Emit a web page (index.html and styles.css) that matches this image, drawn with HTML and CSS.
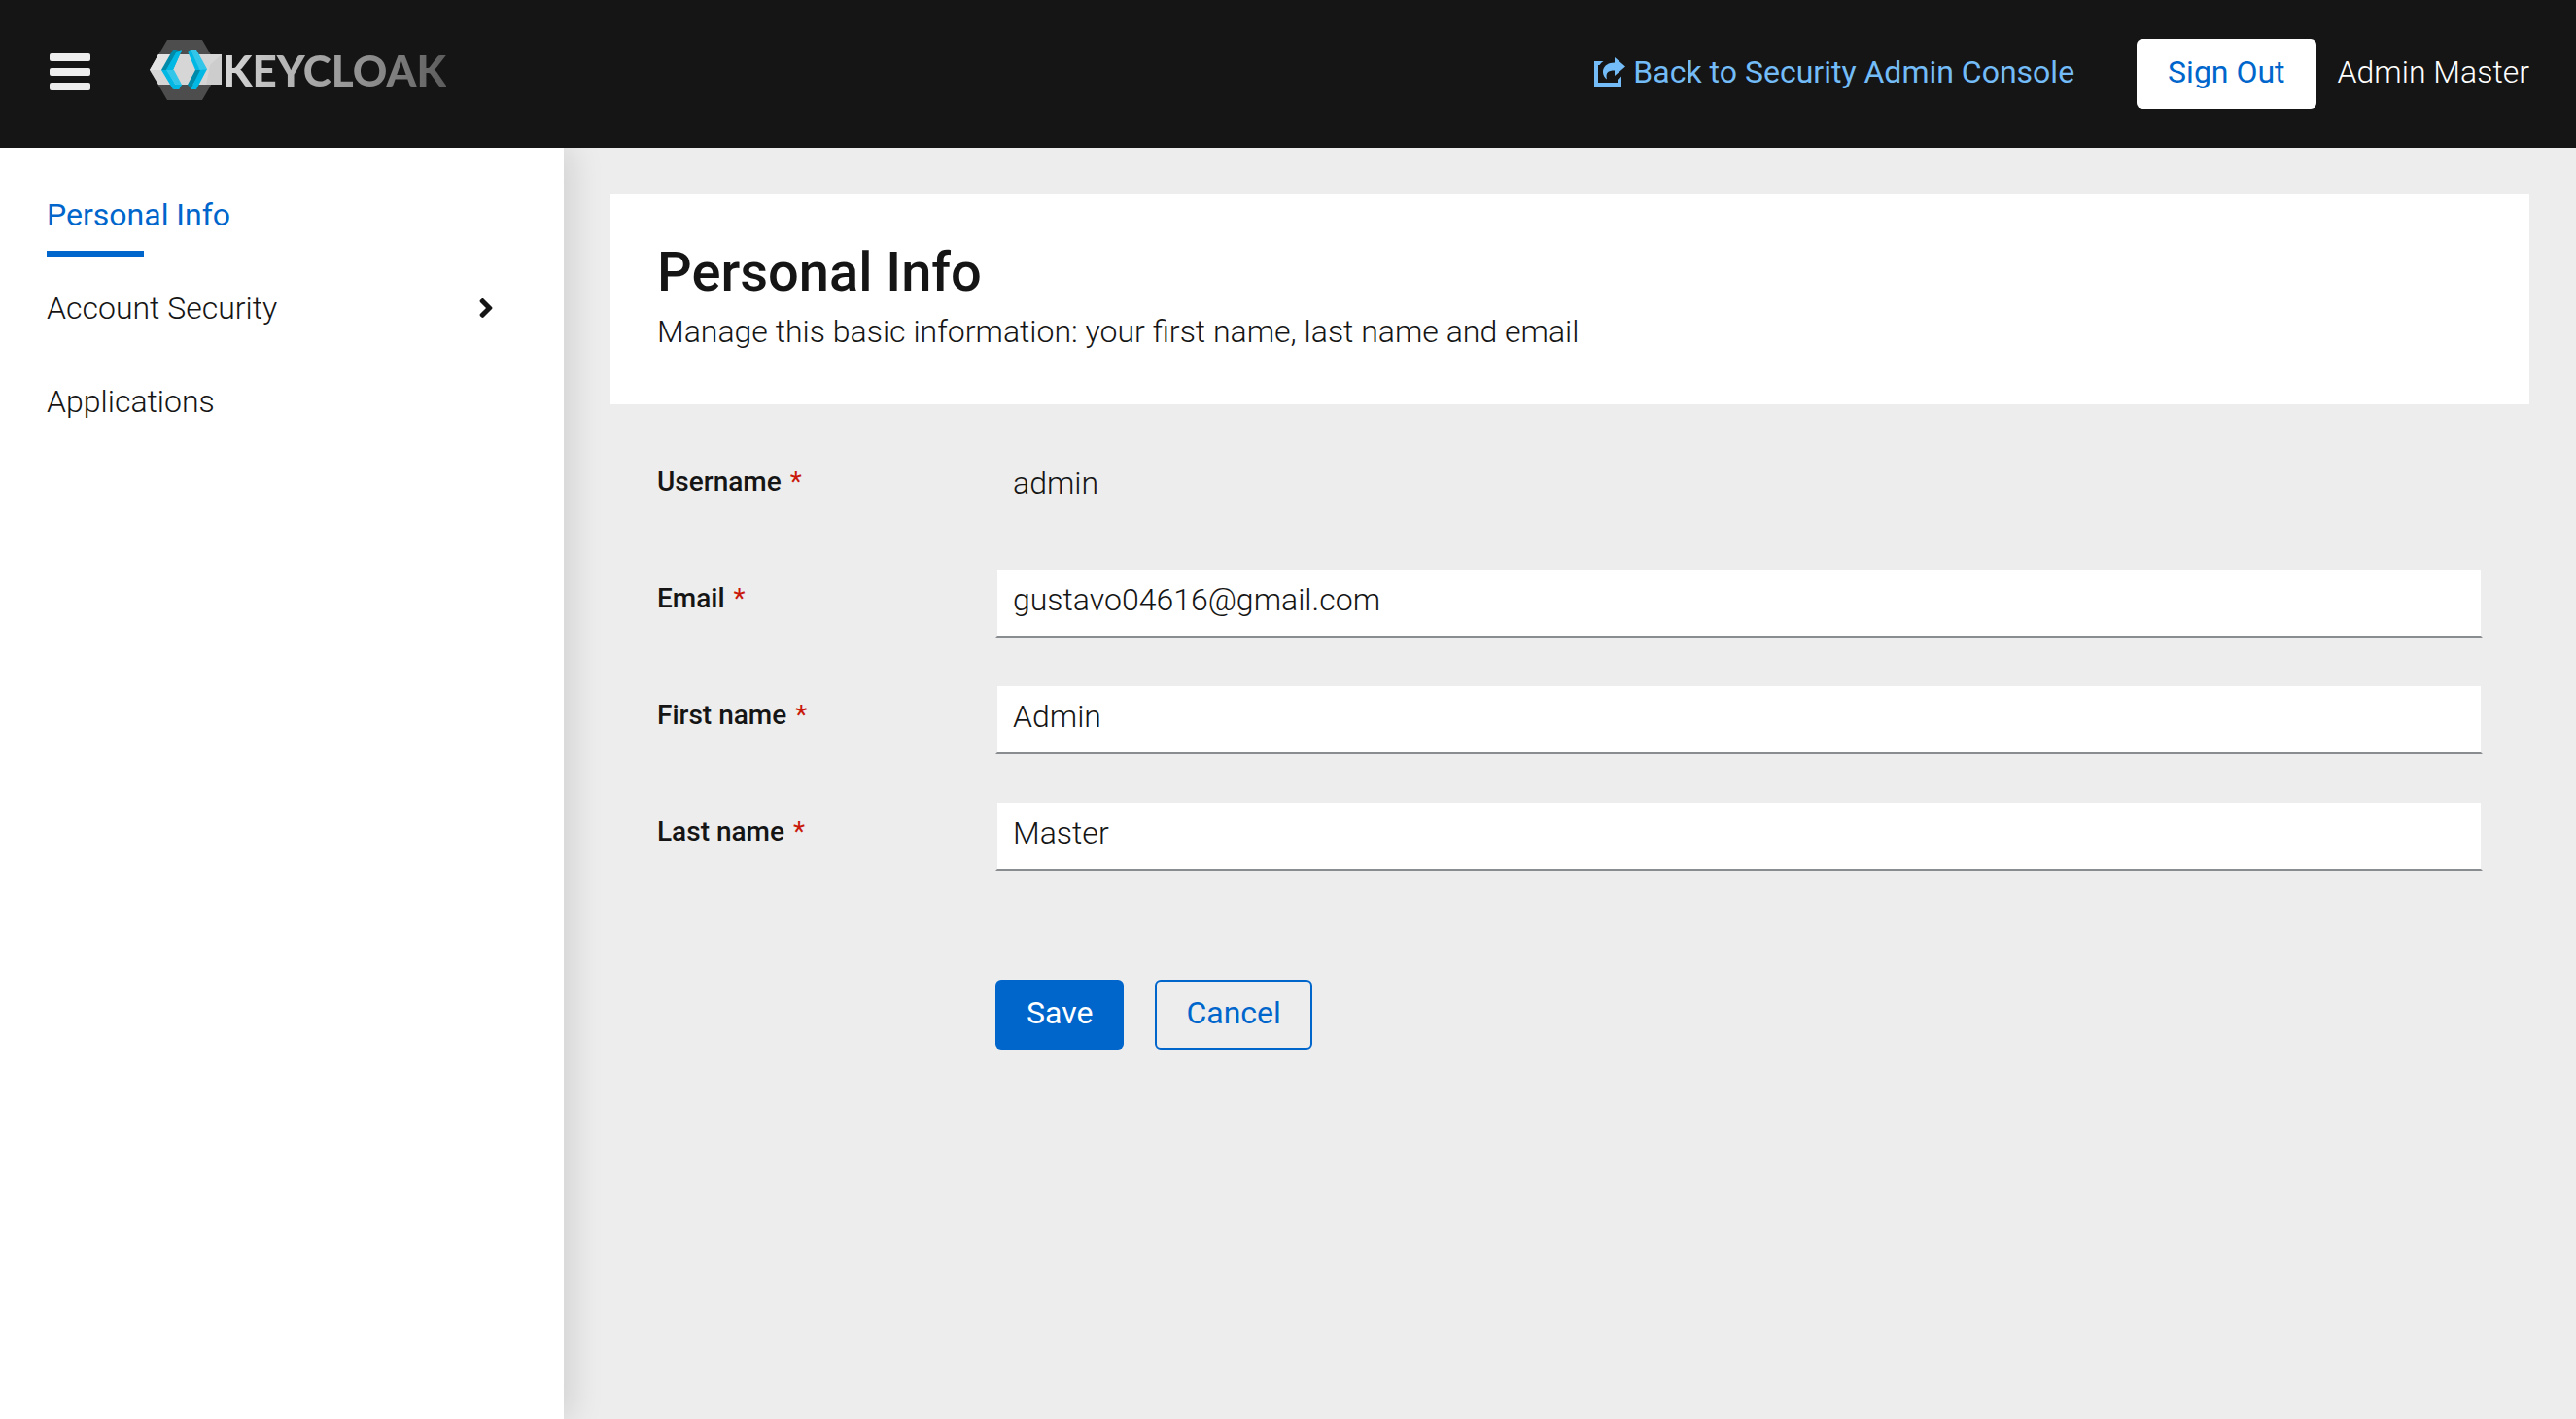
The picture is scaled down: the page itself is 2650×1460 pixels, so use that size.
FILE: index.html
```html
<!DOCTYPE html>
<html lang="en">
<head>
<meta charset="utf-8">
<title>Keycloak Account Management</title>
<link rel="stylesheet" href="styles.css">
</head>
<body>
<header class="masthead">
  <button class="menu-toggle" type="button" aria-label="Toggle navigation">
    <svg viewBox="0 0 42 38" width="42" height="38" aria-hidden="true"><rect width="42" height="8" rx="2"/><rect y="15" width="42" height="8" rx="2"/><rect y="30" width="42" height="8" rx="2"/></svg>
  </button>
  <a class="brand" href="#">
    <svg class="brand-mark" viewBox="0 0 75 62" width="75" height="62" aria-hidden="true">
      <path fill="#4d4d4d" d="M18 0h36l18 31-18 31H18L0 31z"/>
      <path fill="#d6d6d6" d="M0 31 9 15h65v31H9z"/>
      <path fill="#e4e4e4" d="M0 31 9 15h12L13 31z"/>
      <path fill="#cdcdcd" d="M74 15v31H58l4-20z"/>
      <path fill="#008aaa" d="M24 10h3l5 2-15 20-5-1z"/>
      <path fill="#00b8e3" d="M28 12l5-2L24 31h-7z"/>
      <path fill="#00b8e3" d="M33 11 24 31h-7l11-19z"/>
      <path fill="#00b8e3" d="M12 31h6l9 16-3 4z"/>
      <path fill="#33c6e9" d="M17 31h8l8 15-3 5h-4l1-4z"/>
      <path fill="#00b8e3" d="M24 51l3-5 6 0-3 5z"/>
      <path fill="#00b8e3" d="M39 12l3-2 12 21h-7z"/>
      <path fill="#33c6e9" d="M42 10h6l11 20-7 2z"/>
      <path fill="#008aaa" d="M47 31h7L42 50l-3-4z"/>
      <path fill="#00b8e3" d="M52 31l7-1L48 51h-6z"/>
    </svg>
    <span class="brand-name">KEYCLOAK</span>
  </a>
  <div class="tools">
    <a class="back-link" href="#">
      <svg viewBox="0 0 32 30" width="32" height="30" aria-hidden="true"><path fill="currentColor" d="M0 4h9.500q-2.500 1.500-4 4H4v18h20v-3.500q2.500-.5 4-3V30H0zM21 0l11 9.500L21 19v-5.500c-7 0-9.500 2-8 9C6 17 8 5.500 21 5.500z"/></svg>
      <span>Back to Security Admin Console</span>
    </a>
    <button class="btn btn-light" type="button">Sign Out</button>
    <span class="user">Admin Master</span>
  </div>
</header>
<div class="page">
  <nav class="sidebar" aria-label="Account">
    <a class="nav-link current" href="#">Personal Info</a>
    <a class="nav-link" href="#">Account Security
      <svg viewBox="0 0 256 512" width="16" height="32" aria-hidden="true"><path fill="currentColor" d="M224.300 273l-136 136c-9.400 9.400-24.600 9.400-33.900 0l-22.600-22.600c-9.400-9.400-9.400-24.600 0-33.900l96.400-96.400-96.400-96.400c-9.400-9.400-9.400-24.600 0-33.900L54.300 103c9.400-9.400 24.600-9.400 33.900 0l136 136c9.500 9.400 9.500 24.600.1 34z"/></svg>
    </a>
    <a class="nav-link" href="#">Applications</a>
  </nav>
  <main class="content">
    <section class="intro">
      <h1>Personal Info</h1>
      <p>Manage this basic information: your first name, last name and email</p>
    </section>
    <form class="form">
      <div class="row">
        <label for="username">Username <span class="required">*</span></label>
        <input class="field readonly" id="username" type="text" value="admin" readonly>
      </div>
      <div class="row">
        <label for="email">Email <span class="required">*</span></label>
        <input class="field" id="email" type="email" value="gustavo04616@gmail.com">
      </div>
      <div class="row">
        <label for="first">First name <span class="required">*</span></label>
        <input class="field" id="first" type="text" value="Admin">
      </div>
      <div class="row">
        <label for="last">Last name <span class="required">*</span></label>
        <input class="field" id="last" type="text" value="Master">
      </div>
      <div class="actions">
        <button class="btn btn-primary" type="button">Save</button>
        <button class="btn btn-outline" type="button">Cancel</button>
      </div>
    </form>
  </main>
</div>
</body>
</html>
```
FILE: styles.css
```css
* { box-sizing: border-box; }
body {
  margin: 0;
  min-height: 100vh;
  display: flex;
  flex-direction: column;
  background: #ededed;
  color: #151515;
  font: 300 32px/48px Roboto, "Liberation Sans", sans-serif;
}
a { color: inherit; text-decoration: none; }
h1, p { margin: 0; }

.masthead {
  display: flex;
  align-items: center;
  min-height: 152px;
  padding: 0 48px;
  background: #151515;
  color: #fff;
}
.menu-toggle {
  display: flex;
  padding: 0 3px 4px;
  border: 0;
  background: none;
  fill: #ededed;
}
.brand {
  display: flex;
  align-items: center;
  margin-left: 58px;
  padding-bottom: 8px;
}
.brand-name {
  font: 900 44px/48px Lato, sans-serif;
  background: linear-gradient(90deg, #d8d8d8, #a8a8a8 40%, #888 70%, #5c5c5c);
  -webkit-background-clip: text;
  background-clip: text;
  color: transparent;
}
.tools { display: flex; align-items: center; margin-left: auto; }
.back-link {
  display: flex;
  align-items: center;
  gap: 8px;
  margin-right: 64px;
  padding-bottom: 4px;
  color: #73bcf7;
  font-weight: 400;
}
.user { margin-left: 22px; padding-bottom: 4px; }

.btn {
  height: 72px;
  padding: 0 30px 4px;
  border: 2px solid transparent;
  border-radius: 6px;
  font: 400 32px/48px Roboto, "Liberation Sans", sans-serif;
}
.btn-light { background: #fff; color: #06c; }
.btn-primary { background: #06c; color: #fff; }
.btn-outline { background: none; border-color: #06c; color: #06c; }

.page { display: flex; flex: 1; }
.sidebar {
  flex: 0 0 580px;
  padding-top: 16px;
  background: #fff;
  box-shadow: 8px 0 32px rgba(3, 3, 3, .12);
  clip-path: inset(0 -48px 0 0);
}
.nav-link {
  display: flex;
  align-items: center;
  justify-content: space-between;
  height: 96px;
  padding: 10px 72px 0 48px;
}
.current {
  color: #06c;
  font-weight: 400;
  background: linear-gradient(#06c, #06c) 48px 100% / 100px 6px no-repeat;
}

.content { flex: 1; min-width: 0; padding: 48px; }
.intro { padding: 48px 48px 44px; background: #fff; }
.intro h1 { font-size: 56px; line-height: 64px; font-weight: 500; }
.intro p { padding: 5px 0 7px; }

.form { display: flex; flex-direction: column; gap: 48px; padding: 48px; }
.row { display: grid; grid-template-columns: 300px 1fr; column-gap: 48px; }
.row label { padding-top: 10px; font-size: 28px; line-height: 44px; font-weight: 500; }
.required { margin-left: 2px; color: #c9190b; font-weight: 400; }
.field {
  width: 100%;
  height: 72px;
  padding: 0 16px 6px;
  border: 2px solid #ededed;
  border-bottom-color: #8a8d90;
  border-radius: 0;
  background: #fff;
  color: inherit;
  font: inherit;
}
.readonly { background: none; border-color: transparent; }
.actions { display: flex; gap: 32px; padding: 64px 0 0 348px; }
```
